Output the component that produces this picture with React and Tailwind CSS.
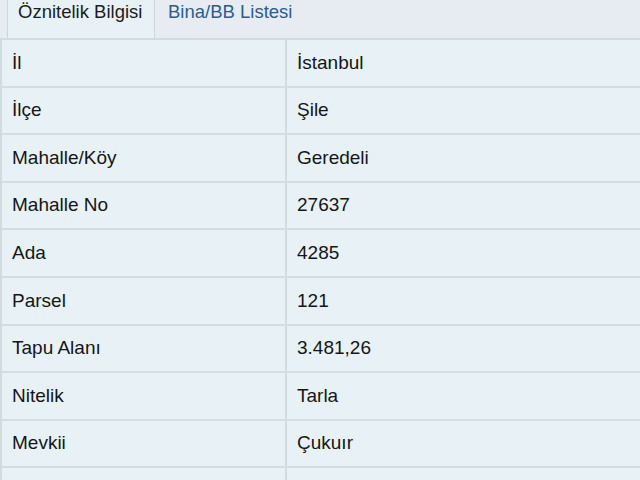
const rows = [
  ["İl", "İstanbul"],
  ["İlçe", "Şile"],
  ["Mahalle/Köy", "Geredeli"],
  ["Mahalle No", "27637"],
  ["Ada", "4285"],
  ["Parsel", "121"],
  ["Tapu Alanı", "3.481,26"],
  ["Nitelik", "Tarla"],
  ["Mevkii", "Çukuır"],
  ["", ""],
];

export default function App() {
  return (
    <div className="h-[480px] w-[640px] overflow-hidden bg-[#e6ecf2] font-['Liberation_Sans',Arial,sans-serif]">
      {/* tabs */}
      <div className="flex h-[38px] items-stretch pl-[7px]">
        <div className="w-[148px] border-x border-[#cdd6dc] bg-[#e8f2f6] pl-[10px] text-[18.5px] leading-[23px] text-[#1c1c1c]">
          Öznitelik Bilgisi
        </div>
        <div className="pl-[13px] text-[18.5px] leading-[23px] text-[#2d5c8c]">Bina/BB Listesi</div>
      </div>

      {/* attribute table */}
      <div className="border-t-2 border-l-2 border-[#d2dbe0] bg-[#e8f2f6]">
        {rows.map(([k, v], i) => (
          <div key={i} className="flex h-[47.6px] border-b-2 border-[#d4dde2] text-[19px] text-[#151515]">
            <div className="flex w-[285px] items-center border-r-2 border-[#d2dbe0] pl-[10px]">{k}</div>
            <div className="flex flex-1 items-center pl-[10px]">{v}</div>
          </div>
        ))}
      </div>
    </div>
  );
}
